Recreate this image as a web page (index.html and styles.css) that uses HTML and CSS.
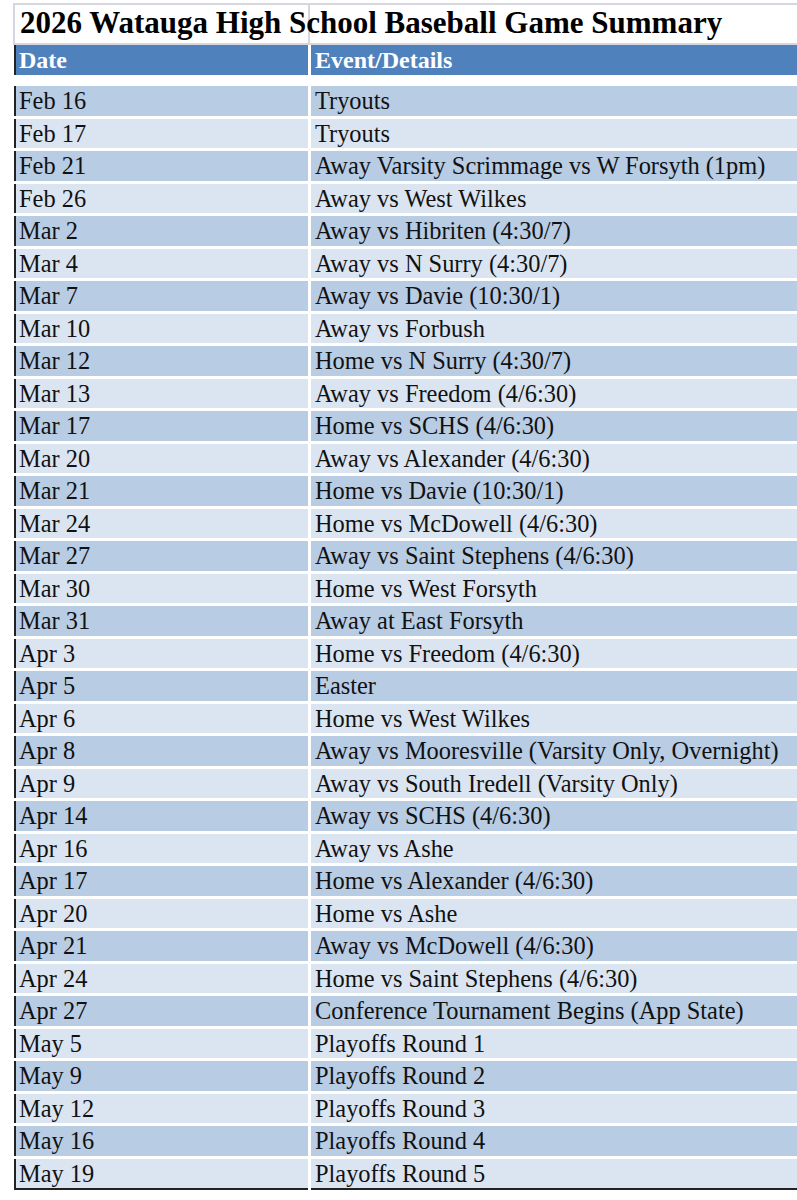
FILE: index.html
```html
<!DOCTYPE html>
<html lang="en">
<head>
<meta charset="utf-8">
<title>2026 Watauga High School Baseball Game Summary</title>
<link rel="stylesheet" href="styles.css">
</head>
<body>
<div class="sheet">
  <div class="title-row">2026 Watauga High School Baseball Game Summary</div>
  <div class="row head"><div class="c1">Date</div><div class="c2">Event/Details</div></div>
  <div class="spacer"></div>
  <div class="rows">
    <div class="row"><div class="c1">Feb 16</div><div class="c2">Tryouts</div></div>
    <div class="row"><div class="c1">Feb 17</div><div class="c2">Tryouts</div></div>
    <div class="row"><div class="c1">Feb 21</div><div class="c2">Away Varsity Scrimmage vs W Forsyth (1pm)</div></div>
    <div class="row"><div class="c1">Feb 26</div><div class="c2">Away vs West Wilkes</div></div>
    <div class="row"><div class="c1">Mar 2</div><div class="c2">Away vs Hibriten (4:30/7)</div></div>
    <div class="row"><div class="c1">Mar 4</div><div class="c2">Away vs N Surry (4:30/7)</div></div>
    <div class="row"><div class="c1">Mar 7</div><div class="c2">Away vs Davie (10:30/1)</div></div>
    <div class="row"><div class="c1">Mar 10</div><div class="c2">Away vs Forbush</div></div>
    <div class="row"><div class="c1">Mar 12</div><div class="c2">Home vs N Surry (4:30/7)</div></div>
    <div class="row"><div class="c1">Mar 13</div><div class="c2">Away vs Freedom (4/6:30)</div></div>
    <div class="row"><div class="c1">Mar 17</div><div class="c2">Home vs SCHS (4/6:30)</div></div>
    <div class="row"><div class="c1">Mar 20</div><div class="c2">Away vs Alexander (4/6:30)</div></div>
    <div class="row"><div class="c1">Mar 21</div><div class="c2">Home vs Davie (10:30/1)</div></div>
    <div class="row"><div class="c1">Mar 24</div><div class="c2">Home vs McDowell (4/6:30)</div></div>
    <div class="row"><div class="c1">Mar 27</div><div class="c2">Away vs Saint Stephens (4/6:30)</div></div>
    <div class="row"><div class="c1">Mar 30</div><div class="c2">Home vs West Forsyth</div></div>
    <div class="row"><div class="c1">Mar 31</div><div class="c2">Away at East Forsyth</div></div>
    <div class="row"><div class="c1">Apr 3</div><div class="c2">Home vs Freedom (4/6:30)</div></div>
    <div class="row"><div class="c1">Apr 5</div><div class="c2">Easter</div></div>
    <div class="row"><div class="c1">Apr 6</div><div class="c2">Home vs West Wilkes</div></div>
    <div class="row"><div class="c1">Apr 8</div><div class="c2">Away vs Mooresville (Varsity Only, Overnight)</div></div>
    <div class="row"><div class="c1">Apr 9</div><div class="c2">Away vs South Iredell (Varsity Only)</div></div>
    <div class="row"><div class="c1">Apr 14</div><div class="c2">Away vs SCHS (4/6:30)</div></div>
    <div class="row"><div class="c1">Apr 16</div><div class="c2">Away vs Ashe</div></div>
    <div class="row"><div class="c1">Apr 17</div><div class="c2">Home vs Alexander (4/6:30)</div></div>
    <div class="row"><div class="c1">Apr 20</div><div class="c2">Home vs Ashe</div></div>
    <div class="row"><div class="c1">Apr 21</div><div class="c2">Away vs McDowell (4/6:30)</div></div>
    <div class="row"><div class="c1">Apr 24</div><div class="c2">Home vs Saint Stephens (4/6:30)</div></div>
    <div class="row"><div class="c1">Apr 27</div><div class="c2">Conference Tournament Begins (App State)</div></div>
    <div class="row"><div class="c1">May 5</div><div class="c2">Playoffs Round 1</div></div>
    <div class="row"><div class="c1">May 9</div><div class="c2">Playoffs Round 2</div></div>
    <div class="row"><div class="c1">May 12</div><div class="c2">Playoffs Round 3</div></div>
    <div class="row"><div class="c1">May 16</div><div class="c2">Playoffs Round 4</div></div>
    <div class="row"><div class="c1">May 19</div><div class="c2">Playoffs Round 5</div></div>
  </div>
</div>
</body>
</html>
```

FILE: styles.css
```css
html, body {
  margin: 0;
  padding: 0;
  background: #ffffff;
  overflow: hidden;
}

body {
  font-family: "Liberation Serif", "Times New Roman", serif;
  color: #111111;
}

.sheet {
  margin: 3px 0 0 13px;
  display: flex;
  flex-direction: column;
}

.title-row {
  border-top: 2px solid #d6d6e0;
  border-bottom: 2px solid #d6d6e0;
  border-left: 2px solid #d6d6e0;
  background: linear-gradient(to right, transparent 293px, #d6d6e0 293px, #d6d6e0 295px, transparent 295px);
  font-weight: bold;
  font-size: 31px;
  line-height: 36px;
  height: 38px;
  padding-left: 5px;
  white-space: nowrap;
  color: #000000;
}

.row {
  display: flex;
  gap: 3px;
  margin-left: 1px;
  border-left: 2px solid #222222;
  height: 29.5px;
  font-size: 24.4px;
  line-height: 29.5px;
}

.rows {
  display: flex;
  flex-direction: column;
  gap: 3px;
}

.c1 {
  width: 289px;
  padding-left: 3px;
  flex: none;
  white-space: nowrap;
}

.c2 {
  flex: 1;
  padding-left: 4px;
  white-space: nowrap;
}

.head {
  height: 30px;
  line-height: 30px;
  font-size: 24px;
  font-weight: bold;
  color: #ffffff;
}

.head .c1,
.head .c2 {
  background: #4f81bd;
}

.spacer {
  height: 11px;
}

.rows .row:nth-child(odd) .c1,
.rows .row:nth-child(odd) .c2 {
  background: #b8cce4;
}

.rows .row:nth-child(even) .c1,
.rows .row:nth-child(even) .c2 {
  background: #dbe5f1;
}

.rows .row:last-child {
  height: 31.5px;
}

.rows .row:last-child .c1,
.rows .row:last-child .c2 {
  border-bottom: 2px solid #222222;
}
```
